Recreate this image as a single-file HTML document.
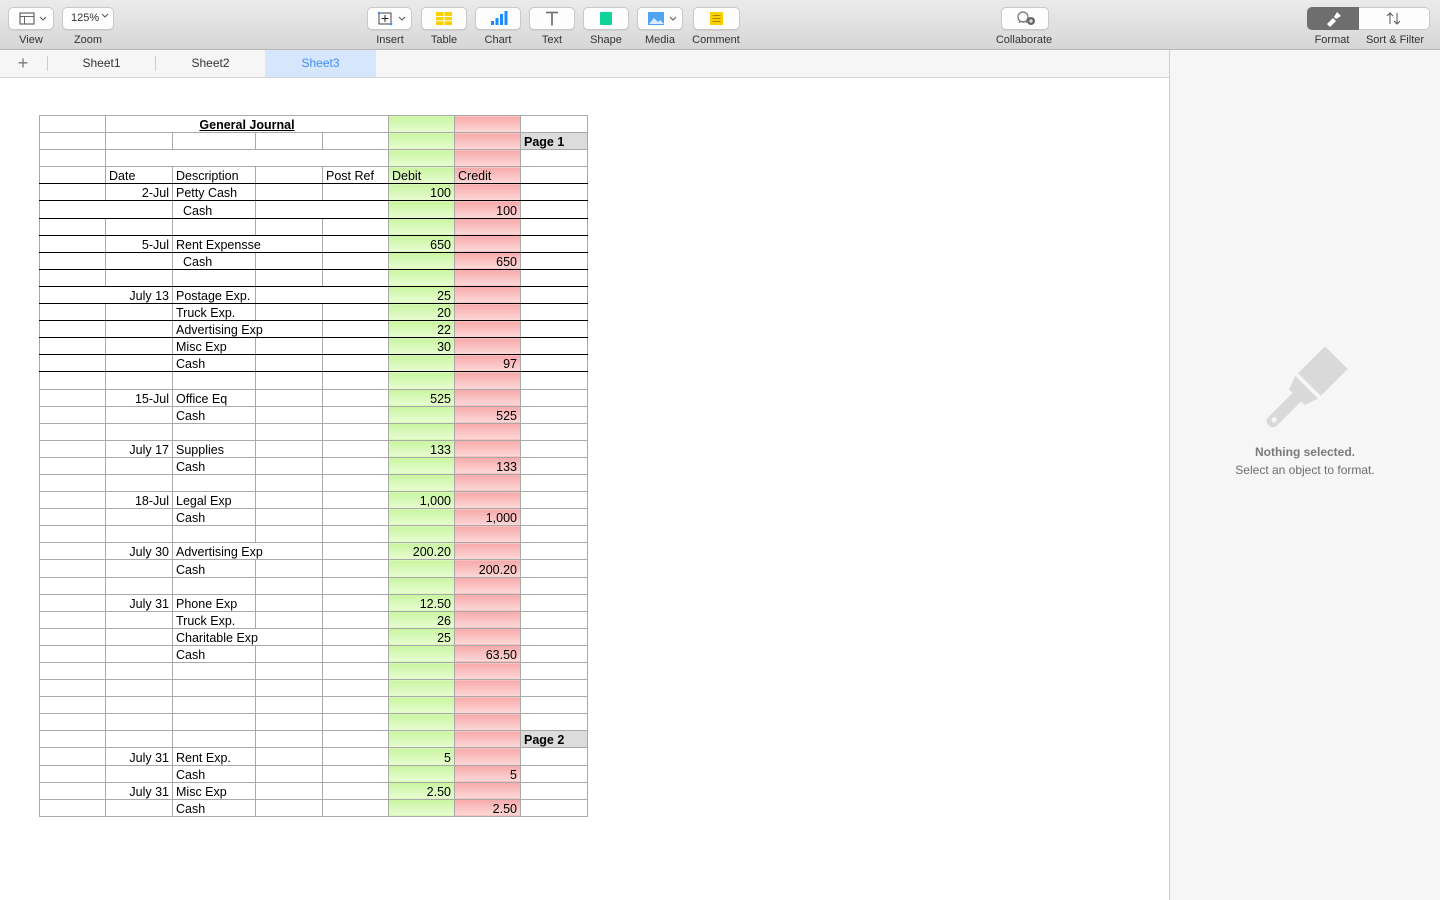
<!DOCTYPE html>
<html><head><meta charset="utf-8"><style>
*{margin:0;padding:0;box-sizing:border-box}
body{width:1440px;height:900px;overflow:hidden;background:#fff;font-family:"Liberation Sans",Arial,sans-serif;position:relative}
#tb{position:absolute;left:0;top:0;width:1440px;height:50px;background:linear-gradient(#ebebeb,#d6d6d6);border-bottom:1px solid #b9b9b9}
.btn{position:absolute;top:7px;height:23px;background:#fdfdfd;border:1px solid #c8c8c8;border-radius:5px;box-shadow:0 1px 0 rgba(0,0,0,.06)}
.lbl{position:absolute;top:34px;font-size:11px;color:#333;text-align:center;transform:translateX(-50%);white-space:nowrap}
#tabs{position:absolute;left:0;top:50px;width:1169px;height:28px;background:#f6f6f6;border-bottom:1px solid #d3d3d3}
.tab{position:absolute;top:0;height:27px;line-height:27px;font-size:12px;color:#333;text-align:center}
#side{position:absolute;left:1169px;top:50px;width:271px;height:850px;background:#f6f6f6;border-left:1px solid #cfcfcf}
table{position:absolute;left:39px;top:115px;width:549px;border-collapse:collapse;table-layout:fixed;font-size:12.5px;color:#000}
td{height:17.1px;border:1px solid #a9a9a9;padding:0 3px;white-space:nowrap;overflow:visible;line-height:14px;vertical-align:bottom}
tr.k td{border-top-color:#000;border-bottom-color:#000}
.f{background:linear-gradient(#c9f59f,#e8fdd2);text-align:right}
.g{background:linear-gradient(#f7a9a9,#fdd8d8);text-align:right}
.r{text-align:right}
.h{background:#dcdcdc;font-weight:bold}
.t{text-align:center;font-weight:bold;text-decoration:underline}
.i{padding-left:10px}
</style></head><body>
<div id="tb">
 <div class="btn" style="left:8px;width:46px"><svg width="44" height="21"><rect x="11" y="5" width="14" height="11" fill="none" stroke="#666" stroke-width="1.2"/><line x1="11" y1="8.5" x2="25" y2="8.5" stroke="#666"/><line x1="15.5" y1="8.5" x2="15.5" y2="16" stroke="#666"/><path d="M31 9l3 3 3-3" fill="none" stroke="#555"/></svg></div>
 <div class="lbl" style="left:31px">View</div>
 <div class="btn" style="left:62px;width:52px;font-size:11px;line-height:21px;padding-left:8px;color:#333">125%<svg width="10" height="10" style="margin-left:2px"><path d="M1 3l3 3 3-3" fill="none" stroke="#555"/></svg></div>
 <div class="lbl" style="left:88px">Zoom</div>
 <div class="btn" style="left:367px;width:45px"><svg width="44" height="21"><rect x="11" y="5" width="12" height="11" fill="none" stroke="#444"/><path d="M17 7v7M13.5 10.5h7" stroke="#222"/><circle cx="11" cy="5" r="1.3" fill="#4a8fe8"/><circle cx="23" cy="16" r="1.3" fill="#4a8fe8"/><path d="M31 9l3 3 3-3" fill="none" stroke="#555"/></svg></div>
 <div class="lbl" style="left:390px">Insert</div>
 <div class="btn" style="left:421px;width:46px"><svg width="44" height="21"><rect x="14" y="4" width="16" height="13" fill="#f9d000"/><path d="M14 8.5h16M14 12.8h16M22 4v13" stroke="#fff"/></svg></div>
 <div class="lbl" style="left:444px">Table</div>
 <div class="btn" style="left:475px;width:46px"><svg width="44" height="21"><rect x="15" y="13" width="3" height="4" fill="#1a8cff"/><rect x="19.5" y="10" width="3" height="7" fill="#1a8cff"/><rect x="24" y="6" width="3" height="11" fill="#1a8cff"/><rect x="28.5" y="3" width="3" height="14" fill="#1a8cff"/></svg></div>
 <div class="lbl" style="left:498px">Chart</div>
 <div class="btn" style="left:529px;width:46px"><svg width="44" height="21"><path d="M16 4.5h12M22 4.5v13" stroke="#666" stroke-width="1.6"/></svg></div>
 <div class="lbl" style="left:552px">Text</div>
 <div class="btn" style="left:583px;width:46px"><svg width="44" height="21"><rect x="16" y="4" width="12" height="13" rx="1" fill="#10d39b"/></svg></div>
 <div class="lbl" style="left:606px">Shape</div>
 <div class="btn" style="left:637px;width:46px"><svg width="44" height="21"><rect x="10" y="4" width="16" height="13" fill="#4ea3f2"/><path d="M11 16l5-6 4 4 2-2 4 4z" fill="#d8ecff"/><path d="M32 9l3 3 3-3" fill="none" stroke="#555"/></svg></div>
 <div class="lbl" style="left:660px">Media</div>
 <div class="btn" style="left:693px;width:47px"><svg width="44" height="21"><rect x="16" y="4" width="13" height="13" fill="#f9d000"/><path d="M18.5 7.5h8M18.5 10.5h8M18.5 13.5h8" stroke="#8a6d00" stroke-width=".8"/></svg></div>
 <div class="lbl" style="left:716px">Comment</div>
 <div class="btn" style="left:1001px;width:48px"><svg width="46" height="21"><circle cx="21" cy="9" r="5" fill="none" stroke="#777" stroke-width="1.3"/><path d="M17 15c0-2 8-2 8 0" fill="none" stroke="#777"/><circle cx="29" cy="13" r="4" fill="#666"/><path d="M29 11v4M27 13h4" stroke="#fff"/></svg></div>
 <div class="lbl" style="left:1024px">Collaborate</div>
 <div style="position:absolute;left:1307px;top:7px;width:52px;height:23px;background:#6e6e6e;border-radius:5px 0 0 5px"><svg width="52" height="23"><path d="M20 17l6-6 3 3-6 6z M27 10l3-5 4 4-5 3z" fill="#fff"/></svg></div>
 <div style="position:absolute;left:1359px;top:7px;width:71px;height:23px;background:#fdfdfd;border:1px solid #c8c8c8;border-left:none;border-radius:0 5px 5px 0"><svg width="70" height="21"><path d="M31 5v11M28 8l3-3 3 3M38 5v11M35 13l3 3 3-3" fill="none" stroke="#555"/></svg></div>
 <div class="lbl" style="left:1332px">Format</div>
 <div class="lbl" style="left:1395px">Sort &amp; Filter</div>
</div>
<div id="tabs">
 <div class="tab" style="left:10px;width:26px;font-size:18px;color:#777;font-weight:300">+</div>
 <div style="position:absolute;left:47px;top:6px;width:1px;height:15px;background:#ccc"></div>
 <div class="tab" style="left:48px;width:107px">Sheet1</div>
 <div style="position:absolute;left:155px;top:6px;width:1px;height:15px;background:#ccc"></div>
 <div class="tab" style="left:156px;width:109px">Sheet2</div>
 <div class="tab" style="left:265px;width:111px;background:#d6e6fc;color:#3f8ef3">Sheet3</div>
</div>
<div id="side">
 <svg style="position:absolute;left:81px;top:293px" width="100" height="100"><g transform="rotate(45 50 50)" fill="#d9d9d9"><path d="M34 0h32v38h-32z"/><path d="M34 42h32l-5 14h-5v34a6 6 0 0 1-12 0v-34h-5z"/><circle cx="50" cy="88" r="2.6" fill="#f6f6f6"/></g></svg>
 <div style="position:absolute;left:0;width:270px;top:395px;text-align:center;font-size:12px;font-weight:bold;color:#7a7a7a">Nothing selected.</div>
 <div style="position:absolute;left:0;width:270px;top:413px;text-align:center;font-size:12px;color:#6d6d6d">Select an object to format.</div>
</div>
<table>
<colgroup><col style="width:66px"><col style="width:67px"><col style="width:83px"><col style="width:67px"><col style="width:66px"><col style="width:66px"><col style="width:66px"><col style="width:67px"></colgroup>
<tr><td></td><td colspan="4" class="t">General Journal</td><td class="f"></td><td class="g"></td><td></td></tr>
<tr><td></td><td></td><td></td><td></td><td></td><td class="f"></td><td class="g"></td><td class="h">Page 1</td></tr>
<tr><td></td><td colspan="4"></td><td class="f"></td><td class="g"></td><td></td></tr>
<tr class="k"><td></td><td>Date</td><td>Description</td><td></td><td>Post Ref</td><td class="f" style="text-align:left">Debit</td><td class="g" style="text-align:left">Credit</td><td></td></tr>
<tr class="k"><td></td><td class="r">2-Jul</td><td>Petty Cash</td><td></td><td></td><td class="f">100</td><td class="g"></td><td></td></tr>
<tr class="k"><td colspan="2"></td><td class="i">Cash</td><td colspan="2"></td><td class="f"></td><td class="g">100</td><td></td></tr>
<tr class="k"><td></td><td></td><td></td><td></td><td></td><td class="f"></td><td class="g"></td><td></td></tr>
<tr class="k"><td></td><td class="r">5-Jul</td><td colspan="2">Rent Expensse</td><td></td><td class="f">650</td><td class="g"></td><td></td></tr>
<tr class="k"><td></td><td></td><td class="i">Cash</td><td></td><td></td><td class="f"></td><td class="g">650</td><td></td></tr>
<tr class="k"><td></td><td></td><td></td><td></td><td></td><td class="f"></td><td class="g"></td><td></td></tr>
<tr class="k"><td colspan="2" class="r">July 13</td><td>Postage Exp.</td><td colspan="2"></td><td class="f">25</td><td class="g"></td><td></td></tr>
<tr class="k"><td></td><td></td><td>Truck Exp.</td><td></td><td></td><td class="f">20</td><td class="g"></td><td></td></tr>
<tr class="k"><td></td><td></td><td colspan="2">Advertising Exp</td><td></td><td class="f">22</td><td class="g"></td><td></td></tr>
<tr class="k"><td></td><td></td><td>Misc Exp</td><td></td><td></td><td class="f">30</td><td class="g"></td><td></td></tr>
<tr class="k"><td></td><td></td><td>Cash</td><td></td><td></td><td class="f"></td><td class="g">97</td><td></td></tr>
<tr><td></td><td></td><td></td><td></td><td></td><td class="f"></td><td class="g"></td><td></td></tr>
<tr><td></td><td class="r">15-Jul</td><td>Office Eq</td><td></td><td></td><td class="f">525</td><td class="g"></td><td></td></tr>
<tr><td></td><td></td><td>Cash</td><td></td><td></td><td class="f"></td><td class="g">525</td><td></td></tr>
<tr><td></td><td></td><td></td><td></td><td></td><td class="f"></td><td class="g"></td><td></td></tr>
<tr><td></td><td class="r">July 17</td><td>Supplies</td><td></td><td></td><td class="f">133</td><td class="g"></td><td></td></tr>
<tr><td></td><td></td><td>Cash</td><td></td><td></td><td class="f"></td><td class="g">133</td><td></td></tr>
<tr><td></td><td></td><td></td><td></td><td></td><td class="f"></td><td class="g"></td><td></td></tr>
<tr><td></td><td class="r">18-Jul</td><td>Legal Exp</td><td></td><td></td><td class="f">1,000</td><td class="g"></td><td></td></tr>
<tr><td></td><td></td><td>Cash</td><td></td><td></td><td class="f"></td><td class="g">1,000</td><td></td></tr>
<tr><td></td><td></td><td></td><td></td><td></td><td class="f"></td><td class="g"></td><td></td></tr>
<tr><td></td><td class="r">July 30</td><td colspan="2">Advertising Exp</td><td></td><td class="f">200.20</td><td class="g"></td><td></td></tr>
<tr><td></td><td></td><td>Cash</td><td></td><td></td><td class="f"></td><td class="g">200.20</td><td></td></tr>
<tr><td></td><td></td><td></td><td></td><td></td><td class="f"></td><td class="g"></td><td></td></tr>
<tr><td></td><td class="r">July 31</td><td>Phone Exp</td><td></td><td></td><td class="f">12.50</td><td class="g"></td><td></td></tr>
<tr><td></td><td></td><td>Truck Exp.</td><td></td><td></td><td class="f">26</td><td class="g"></td><td></td></tr>
<tr><td></td><td></td><td colspan="2">Charitable Exp</td><td></td><td class="f">25</td><td class="g"></td><td></td></tr>
<tr><td></td><td></td><td>Cash</td><td></td><td></td><td class="f"></td><td class="g">63.50</td><td></td></tr>
<tr><td></td><td></td><td></td><td></td><td></td><td class="f"></td><td class="g"></td><td></td></tr>
<tr><td></td><td></td><td></td><td></td><td></td><td class="f"></td><td class="g"></td><td></td></tr>
<tr><td></td><td></td><td></td><td></td><td></td><td class="f"></td><td class="g"></td><td></td></tr>
<tr><td></td><td></td><td></td><td></td><td></td><td class="f"></td><td class="g"></td><td></td></tr>
<tr><td></td><td></td><td></td><td></td><td></td><td class="f"></td><td class="g"></td><td class="h">Page 2</td></tr>
<tr><td></td><td class="r">July 31</td><td>Rent Exp.</td><td></td><td></td><td class="f">5</td><td class="g"></td><td></td></tr>
<tr><td></td><td></td><td>Cash</td><td></td><td></td><td class="f"></td><td class="g">5</td><td></td></tr>
<tr><td></td><td class="r">July 31</td><td>Misc Exp</td><td></td><td></td><td class="f">2.50</td><td class="g"></td><td></td></tr>
<tr><td></td><td></td><td>Cash</td><td></td><td></td><td class="f"></td><td class="g">2.50</td><td></td></tr>
</table>
</body></html>
